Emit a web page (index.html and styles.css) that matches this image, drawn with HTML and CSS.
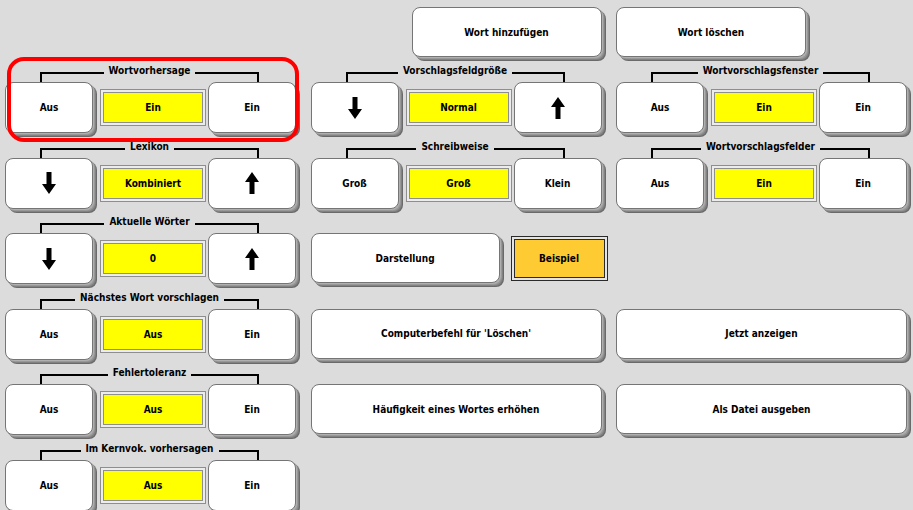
FILE: index.html
```html
<!DOCTYPE html>
<html lang="de">
<head>
<meta charset="utf-8">
<title>Wortvorhersage</title>
<link rel="stylesheet" href="styles.css">
</head>
<body>
<div class="screen">
  <div class="grid">
    <div class="cell"></div>
    <div class="cell top-end"><div class="btn top-btn">Wort hinzufügen</div></div>
    <div class="cell"><div class="btn top-btn">Wort löschen</div></div>

    <!-- row 1 -->
    <div class="cell">
      <div class="title"><span class="arm l"></span><span class="label">Wortvorhersage</span><span class="arm r"></span></div>
      <div class="controls"><div class="btn small">Aus</div><div class="value"><span>Ein</span></div><div class="btn small">Ein</div></div>
    </div>
    <div class="cell">
      <div class="title"><span class="arm l"></span><span class="label">Vorschlagsfeldgröße</span><span class="arm r"></span></div>
      <div class="controls">
        <div class="btn small"><svg class="arrow" width="14" height="22" viewBox="0 0 14 22"><path d="M4.5 0h5v12H14L7 22 0 12h4.5z"/></svg></div>
        <div class="value"><span>Normal</span></div>
        <div class="btn small"><svg class="arrow" width="14" height="22" viewBox="0 0 14 22"><path d="M7 0l7 10H9.5v12h-5V10H0z"/></svg></div>
      </div>
    </div>
    <div class="cell">
      <div class="title"><span class="arm l"></span><span class="label">Wortvorschlagsfenster</span><span class="arm r"></span></div>
      <div class="controls"><div class="btn small">Aus</div><div class="value"><span>Ein</span></div><div class="btn small">Ein</div></div>
    </div>

    <!-- row 2 -->
    <div class="cell">
      <div class="title"><span class="arm l"></span><span class="label">Lexikon</span><span class="arm r"></span></div>
      <div class="controls">
        <div class="btn small"><svg class="arrow" width="14" height="22" viewBox="0 0 14 22"><path d="M4.5 0h5v12H14L7 22 0 12h4.5z"/></svg></div>
        <div class="value"><span>Kombiniert</span></div>
        <div class="btn small"><svg class="arrow" width="14" height="22" viewBox="0 0 14 22"><path d="M7 0l7 10H9.5v12h-5V10H0z"/></svg></div>
      </div>
    </div>
    <div class="cell">
      <div class="title"><span class="arm l"></span><span class="label">Schreibweise</span><span class="arm r"></span></div>
      <div class="controls"><div class="btn small">Groß</div><div class="value"><span>Groß</span></div><div class="btn small">Klein</div></div>
    </div>
    <div class="cell">
      <div class="title"><span class="arm l"></span><span class="label">Wortvorschlagsfelder</span><span class="arm r"></span></div>
      <div class="controls"><div class="btn small">Aus</div><div class="value"><span>Ein</span></div><div class="btn small">Ein</div></div>
    </div>

    <!-- row 3 -->
    <div class="cell">
      <div class="title"><span class="arm l"></span><span class="label">Aktuelle Wörter</span><span class="arm r"></span></div>
      <div class="controls">
        <div class="btn small"><svg class="arrow" width="14" height="22" viewBox="0 0 14 22"><path d="M4.5 0h5v12H14L7 22 0 12h4.5z"/></svg></div>
        <div class="value"><span>0</span></div>
        <div class="btn small"><svg class="arrow" width="14" height="22" viewBox="0 0 14 22"><path d="M7 0l7 10H9.5v12h-5V10H0z"/></svg></div>
      </div>
    </div>
    <div class="cell notitle">
      <div class="controls"><div class="btn mid">Darstellung</div><div class="sample"><span>Beispiel</span></div></div>
    </div>
    <div class="cell"></div>

    <!-- row 4 -->
    <div class="cell">
      <div class="title"><span class="arm l"></span><span class="label">Nächstes Wort vorschlagen</span><span class="arm r"></span></div>
      <div class="controls"><div class="btn small">Aus</div><div class="value"><span>Aus</span></div><div class="btn small">Ein</div></div>
    </div>
    <div class="cell notitle"><div class="btn wide">Computerbefehl für 'Löschen'</div></div>
    <div class="cell notitle"><div class="btn wide">Jetzt anzeigen</div></div>

    <!-- row 5 -->
    <div class="cell">
      <div class="title"><span class="arm l"></span><span class="label">Fehlertoleranz</span><span class="arm r"></span></div>
      <div class="controls"><div class="btn small">Aus</div><div class="value"><span>Aus</span></div><div class="btn small">Ein</div></div>
    </div>
    <div class="cell notitle"><div class="btn wide">Häufigkeit eines Wortes erhöhen</div></div>
    <div class="cell notitle"><div class="btn wide">Als Datei ausgeben</div></div>

    <!-- row 6 -->
    <div class="cell">
      <div class="title"><span class="arm l"></span><span class="label">Im Kernvok. vorhersagen</span><span class="arm r"></span></div>
      <div class="controls"><div class="btn small">Aus</div><div class="value"><span>Aus</span></div><div class="btn small">Ein</div></div>
    </div>
    <div class="cell"></div>
    <div class="cell"></div>
  </div>
  <div class="highlight"></div>
</div>
</body>
</html>
```

FILE: styles.css
```css
* { box-sizing: border-box; }

html, body {
  margin: 0;
  padding: 0;
  width: 913px;
  height: 510px;
  overflow: hidden;
  background: #dcdcdc;
}

body {
  font-family: "DejaVu Sans Condensed", "DejaVu Sans", sans-serif;
  font-weight: bold;
  font-size: 10px;
  color: #000;
}

.screen {
  position: relative;
  width: 913px;
  height: 510px;
}

.grid {
  display: grid;
  grid-template-columns: 295px 295px 295px;
  grid-template-rows: 57px repeat(6, 75.5px);
  column-gap: 10.5px;
  padding-left: 5px;
}

.cell {
  display: flex;
  flex-direction: column;
  min-width: 0;
}

.top-end { align-items: flex-end; padding-right: 4px; }

.notitle { padding-top: 25px; }

/* buttons */
.btn {
  display: flex;
  align-items: center;
  justify-content: center;
  background: #fff;
  border: 1px solid #757575;
  border-radius: 8px;
  box-shadow:
    1px 1px 0 #b0b0b0,
    2px 2px 0 #989898,
    3px 3px 0 #828282,
    4px 4px 0 #6a6a6a;
  white-space: nowrap;
}

.top-btn {
  width: 190px;
  height: 50px;
  margin-top: 7px;
}

.small {
  width: 88px;
  height: 51px;
  flex: none;
}

.wide {
  width: 291px;
  height: 50px;
}

.mid {
  width: 189px;
  height: 50px;
  flex: none;
}

.arrow { display: block; fill: #000; }

/* group title bracket */
.title {
  display: flex;
  align-items: flex-start;
  height: 25px;
  margin-left: 35px;
  width: 219px;
}

.label {
  padding: 7px 5px 0;
  line-height: 14px;
  white-space: nowrap;
}

.arm {
  flex: 1;
  height: 10px;
  margin-top: 15px;
  border-top: 2px solid #000;
}
.arm.l { border-left: 2px solid #000; }
.arm.r { border-right: 2px solid #000; }

/* control row */
.controls {
  display: flex;
  align-items: center;
  height: 51px;
}

.value {
  width: 106px;
  height: 37px;
  margin-left: 7px;
  margin-right: 2px;
  padding: 2px;
  border: 1px solid #8e8e8e;
  background: #ececec;
  flex: none;
}

.value span,
.sample span {
  display: flex;
  align-items: center;
  justify-content: center;
  width: 100%;
  height: 100%;
  background: #ffff00;
  border: 1px solid #8e8e8e;
}

.sample {
  width: 97px;
  height: 45px;
  margin-left: 11px;
  padding: 2px;
  border: 1px solid #2a2a2a;
  background: #e4e4e4;
  flex: none;
}

.sample span {
  background: #ffcb33;
  border-color: #2a2a2a;
}

/* red highlight overlay */
.highlight {
  position: absolute;
  left: 7px;
  top: 57px;
  width: 292px;
  height: 85px;
  border: 4px solid #ff0000;
  border-radius: 17px;
  pointer-events: none;
}
```
